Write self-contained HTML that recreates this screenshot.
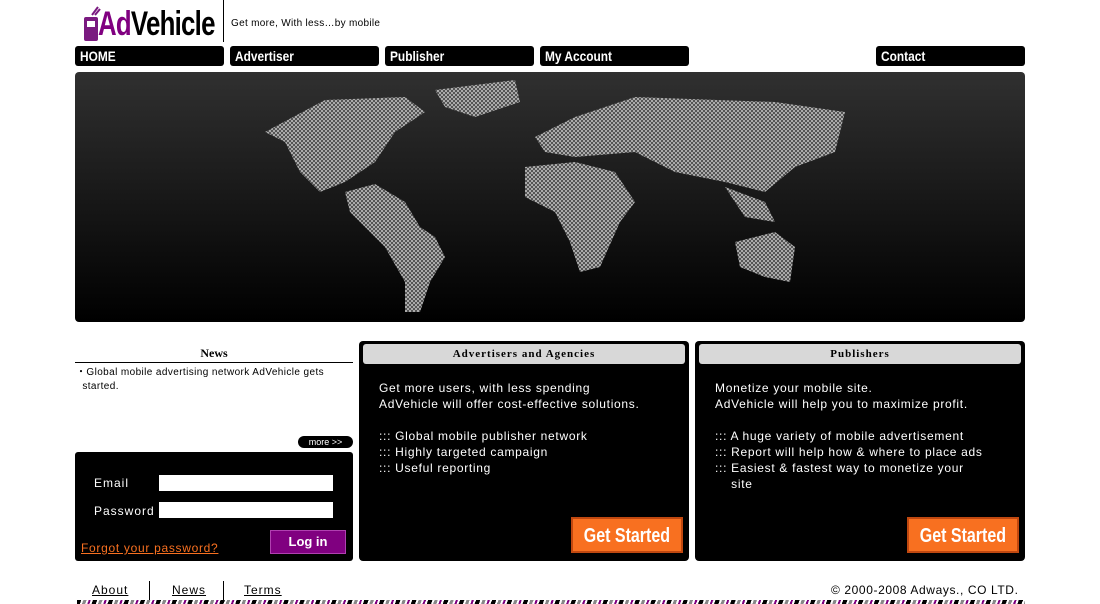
<!DOCTYPE html>
<html><head><meta charset="utf-8"><style>
*{margin:0;padding:0;box-sizing:border-box}
body{width:1100px;height:604px;background:#fff;font-family:"Liberation Sans","Noto Sans CJK JP",sans-serif;position:relative;overflow:hidden}
.abs{position:absolute}
.nav{position:absolute;top:46px;height:20px;background:#000;border-radius:3px;color:#fff;font-weight:bold;font-size:14px;line-height:20px;padding-left:5px}
.nav span{display:inline-block;transform:scaleX(.85);transform-origin:left}
.t{color:#fff;font-size:12px;letter-spacing:1px;line-height:16px}
.gs{position:absolute;width:112px;height:36px;background:#f87020;border:2px solid #c04810;color:#fff;font-weight:bold;font-size:20px;text-align:center;line-height:34px}
.gs span{display:inline-block;transform:scaleX(.8)}
</style></head><body>
<svg class="abs" style="left:82px;top:5px" width="20" height="38"><rect x="2" y="12" width="14" height="24" fill="#7a1a80" rx="2"/><rect x="5" y="16" width="8" height="6" fill="#fff"/><path d="M10 10 L16 2 M13 10 L18 4" stroke="#7a1a80" stroke-width="2"/></svg>
<div class="abs" style="left:98px;top:4px;font-size:34px;font-weight:bold;letter-spacing:-1px;line-height:40px;transform:scaleX(.76);transform-origin:left;white-space:nowrap"><span style="color:#800080">Ad</span><span style="color:#000">Vehicle</span></div>
<div class="abs" style="left:223px;top:0;width:1px;height:42px;background:#000"></div>
<div class="abs" style="left:231px;top:18px;font-size:10px;letter-spacing:.3px">Get more, With less…by mobile</div>
<div class="nav" style="left:75px;width:149px"><span>HOME</span></div>
<div class="nav" style="left:230px;width:149px"><span>Advertiser</span></div>
<div class="nav" style="left:385px;width:149px"><span>Publisher</span></div>
<div class="nav" style="left:540px;width:149px"><span>My Account</span></div>
<div class="nav" style="left:876px;width:149px"><span>Contact</span></div>
<div class="abs" style="left:75px;top:72px;width:950px;height:250px;border-radius:4px;background:linear-gradient(#303030,#000);overflow:hidden">
<svg width="950" height="250"><defs><pattern id="c" width="4" height="4" patternUnits="userSpaceOnUse"><rect width="4" height="4" fill="#555"/><rect width="2" height="2" fill="#aaa"/><rect x="2" y="2" width="2" height="2" fill="#aaa"/></pattern></defs>
<g fill="url(#c)">
<path d="M190 60 L250 28 L330 25 L350 40 L320 60 L300 90 L270 110 L245 120 L225 100 L210 70Z"/>
<path d="M360 18 L440 8 L445 30 L400 45 L370 35Z"/>
<path d="M270 120 L300 112 L330 130 L345 155 L360 165 L370 185 L355 210 L345 240 L330 240 L330 210 L310 175 L275 140Z"/>
<path d="M460 65 L500 45 L560 25 L700 30 L770 40 L760 80 L720 95 L690 120 L650 110 L600 100 L560 80 L500 85 L470 80Z"/>
<path d="M450 95 L500 90 L540 100 L560 130 L545 150 L525 195 L505 200 L495 170 L480 140 L450 125Z"/>
<path d="M660 170 L700 160 L720 175 L715 210 L690 205 L665 195Z"/>
<path d="M650 115 L690 130 L700 150 L670 145Z"/>
</g></svg></div>
<div class="abs" style="left:75px;top:346px;width:278px;text-align:center;font-family:'Liberation Serif',serif;font-weight:bold;font-size:12px">News</div>
<div class="abs" style="left:75px;top:362px;width:278px;height:1px;background:#000"></div>
<div class="abs" style="left:76px;top:366px;width:270px;font-size:10px;letter-spacing:.4px;line-height:14px">・Global mobile advertising network AdVehicle gets<br>&nbsp;&nbsp;started.</div>
<div class="abs" style="left:298px;top:436px;width:55px;height:12px;background:#000;border-radius:6px;color:#fff;font-size:9px;line-height:12px;text-align:center">more &gt;&gt;</div>
<div class="abs" style="left:75px;top:452px;width:278px;height:109px;background:#000;border-radius:3px"></div>
<div class="abs t" style="left:94px;top:475px">Email</div>
<div class="abs t" style="left:94px;top:503px">Password</div>
<div class="abs" style="left:159px;top:475px;width:174px;height:16px;background:#fff"></div>
<div class="abs" style="left:159px;top:502px;width:174px;height:16px;background:#fff"></div>
<div class="abs" style="left:81px;top:541px;font-size:12px;color:#f87020;text-decoration:underline;letter-spacing:.7px">Forgot your password?</div>
<div class="abs" style="left:270px;top:530px;width:76px;height:24px;background:#800080;border:1px solid #b040b0;color:#fff;font-weight:bold;font-size:13px;text-align:center;line-height:22px">Log in</div>
<div class="abs" style="left:359px;top:341px;width:330px;height:220px;background:#000;border-radius:4px"></div>
<div class="abs" style="left:363px;top:344px;width:322px;height:20px;background:#d8d8d8;border-radius:3px;text-align:center;font-family:'Liberation Serif',serif;font-weight:bold;font-size:11px;line-height:21px;letter-spacing:1px">Advertisers and Agencies</div>
<div class="abs t" style="left:379px;top:380px;letter-spacing:.7px">Get more users, with less spending<br>AdVehicle will offer cost-effective solutions.<br><br>::: Global mobile publisher network<br>::: Highly targeted campaign<br>::: Useful reporting</div>
<div class="gs" style="left:571px;top:517px"><span>Get Started</span></div>
<div class="abs" style="left:695px;top:341px;width:330px;height:220px;background:#000;border-radius:4px"></div>
<div class="abs" style="left:699px;top:344px;width:322px;height:20px;background:#d8d8d8;border-radius:3px;text-align:center;font-family:'Liberation Serif',serif;font-weight:bold;font-size:11px;line-height:21px;letter-spacing:1px">Publishers</div>
<div class="abs t" style="left:715px;top:380px;letter-spacing:.7px">Monetize your mobile site.<br>AdVehicle will help you to maximize profit.<br><br>::: A huge variety of mobile advertisement<br>::: Report will help how &amp; where to place ads<br>::: Easiest &amp; fastest way to monetize your<br>&nbsp;&nbsp;&nbsp;&nbsp;site</div>
<div class="gs" style="left:907px;top:517px"><span>Get Started</span></div>
<div class="abs" style="left:92px;top:583px;font-size:12px;text-decoration:underline;letter-spacing:1px">About</div>
<div class="abs" style="left:149px;top:581px;width:1px;height:20px;background:#000"></div>
<div class="abs" style="left:172px;top:583px;font-size:12px;text-decoration:underline;letter-spacing:1px">News</div>
<div class="abs" style="left:223px;top:581px;width:1px;height:20px;background:#000"></div>
<div class="abs" style="left:244px;top:583px;font-size:12px;text-decoration:underline;letter-spacing:1px">Terms</div>
<div class="abs" style="left:831px;top:583px;font-size:12px;letter-spacing:.6px">© 2000-2008 Adways., CO LTD.</div>
<div class="abs" style="left:77px;top:600px;width:948px;height:4px;background:repeating-linear-gradient(110deg,#000 0 4px,#fff 4px 6px,#888 6px 9px,#fff 9px 11px,#800080 11px 13px,#fff 13px 15px)"></div>
</body></html>
